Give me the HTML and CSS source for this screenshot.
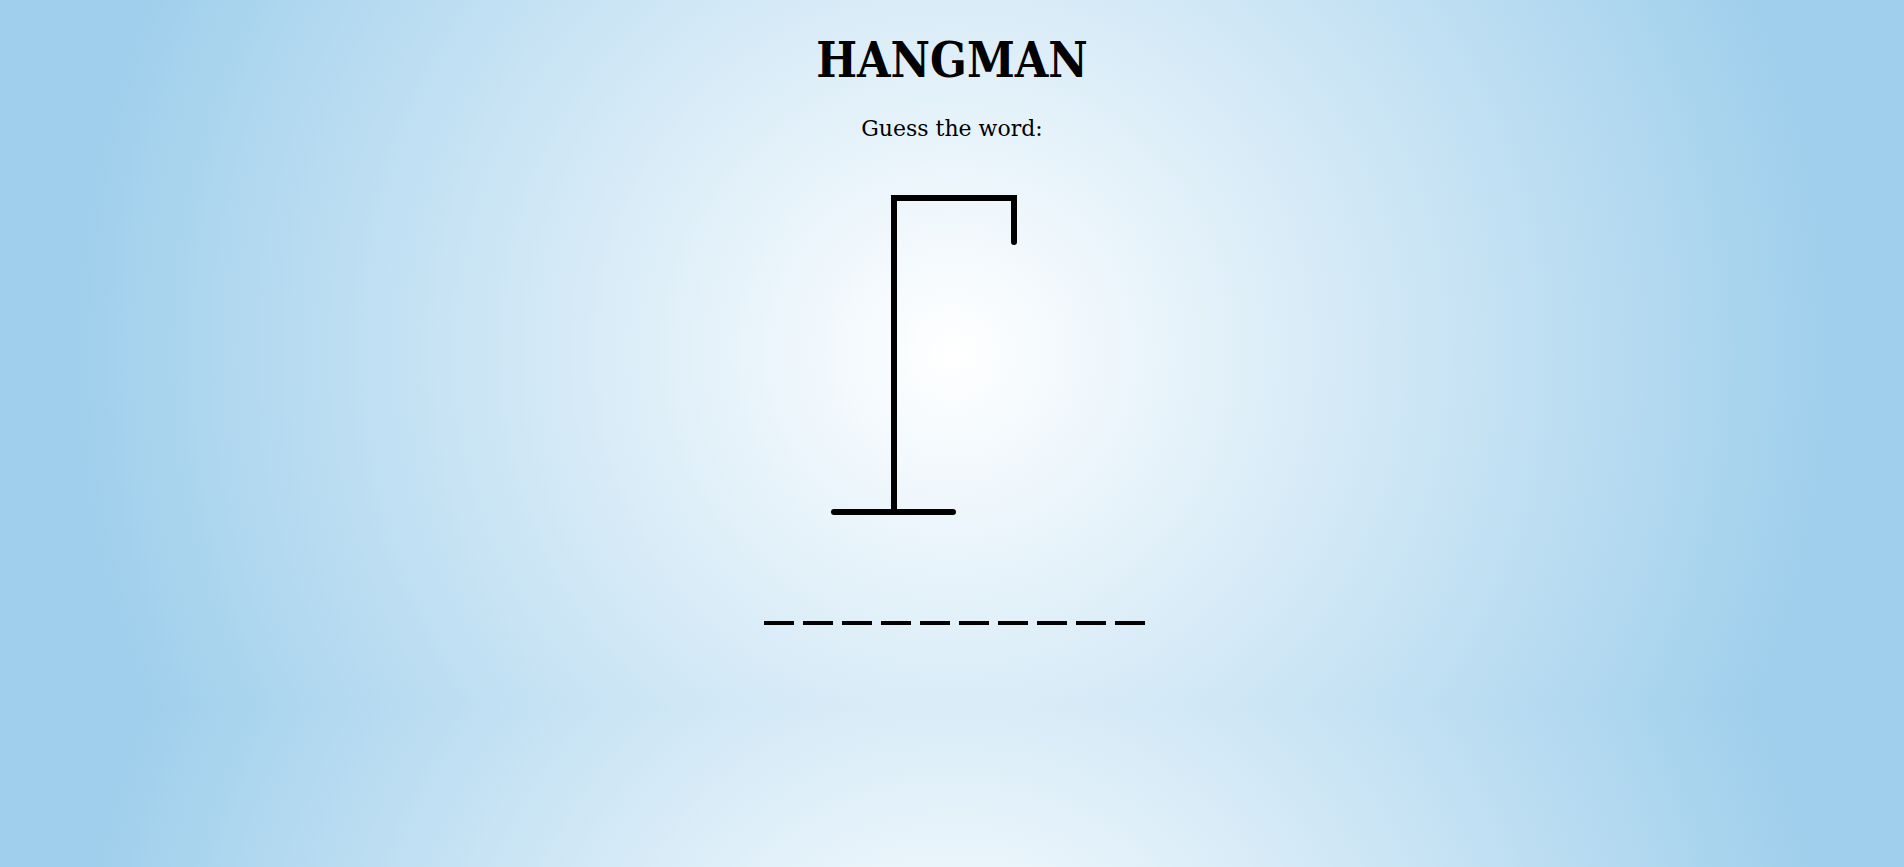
FILE: index.html
```html
<!DOCTYPE html>
<html lang="en">
<head>
<meta charset="utf-8">
<title>Hangman</title>
<link rel="stylesheet" href="styles.css">
</head>
<body>
<main class="game">
  <h1 class="title">HANGMAN</h1>
  <p class="prompt">Guess the word:</p>
  <svg class="gallows" width="260" height="340" viewBox="0 0 260 340">
    <line x1="12" y1="332" x2="131" y2="332" />
    <path d="M72 332 V18 H192 V62" />
  </svg>
  <div class="word">
    <span class="slot"></span><span class="slot"></span><span class="slot"></span><span class="slot"></span><span class="slot"></span><span class="slot"></span><span class="slot"></span><span class="slot"></span><span class="slot"></span><span class="slot"></span>
  </div>
</main>
</body>
</html>
```
FILE: styles.css
```css
html {
  min-height: 100%;
  background-color: #9fcfec;
  background-image: radial-gradient(circle farthest-corner at 50% 50%, #ffffff 0%, #9fcfec 87%);
  background-size: 100% 705px;
  background-repeat: repeat;
}

body {
  margin: 0;
  font-family: "DejaVu Serif", "Liberation Serif", serif;
  color: #000;
}

.game {
  display: flex;
  flex-direction: column;
  align-items: center;
  padding-top: 32px;
}

.title {
  margin: 0;
  font-family: "DejaVu Serif Condensed", "DejaVu Serif", serif;
  font-size: 48px;
  line-height: 56px;
  font-weight: 700;
}

.prompt {
  margin: 27px 0 0;
  font-size: 22px;
  line-height: 28px;
}

.gallows {
  display: block;
  margin-top: 37px;
  fill: none;
  stroke: #000;
  stroke-width: 6;
  stroke-linecap: round;
  stroke-linejoin: miter;
}

.word {
  display: flex;
  gap: 9px;
  margin-top: 101px;
  padding-left: 5px;
}

.slot {
  width: 30px;
  height: 4px;
  background: #000;
}
```
